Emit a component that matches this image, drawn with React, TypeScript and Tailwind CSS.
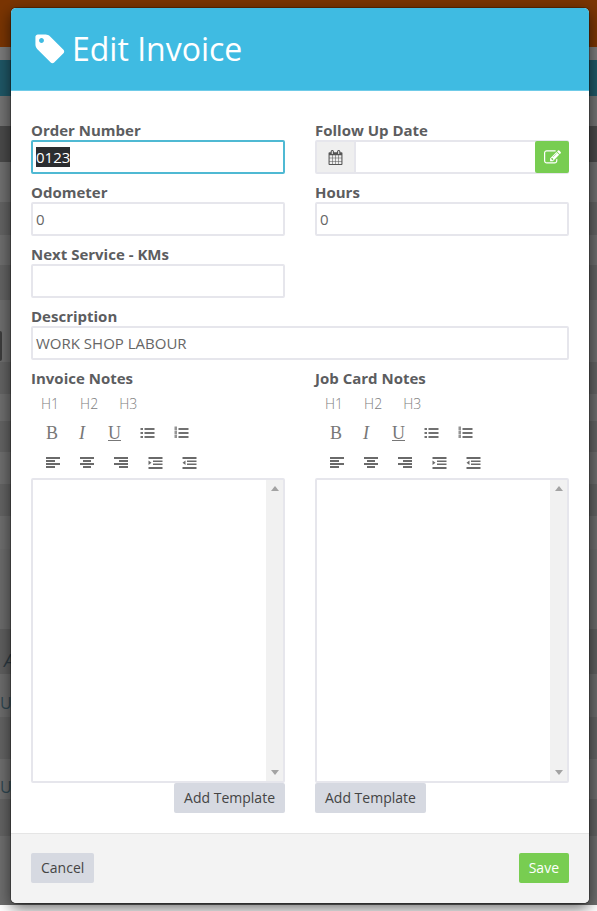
import React from "react";

const font = { fontFamily: '"Open Sans", sans-serif' };

function TagIcon() {
  return (
    <svg width="34" height="34" viewBox="0 0 1792 1792" fill="#fff">
      <path d="M576 448q0-53-37.500-90.500t-90.500-37.500-90.500 37.500-37.500 90.500 37.500 90.500 90.500 37.500 90.500-37.500 37.500-90.500zm1067 576q0 53-37 90l-491 492q-39 37-91 37-53 0-90-37l-715-716q-38-37-64.500-101t-26.500-117v-416q0-52 38-90t90-38h416q53 0 117 26.500t102 64.500l715 714q37 39 37 91z" />
    </svg>
  );
}
function CalIcon() {
  return (
    <svg width="15" height="15" viewBox="0 0 1792 1792" fill="#555">
      <path d="M192 1664h288v-288h-288v288zm352 0h320v-288h-320v288zm-352-352h288v-320h-288v320zm352 0h320v-320h-320v320zm-352-384h288v-288h-288v288zm736 736h320v-288h-320v288zm-384-736h320v-288h-320v288zm768 736h288v-288h-288v288zm-384-352h320v-320h-320v320zm-352-864v-288q0-13-9.500-22.500t-22.500-9.500h-64q-13 0-22.500 9.500t-9.500 22.500v288q0 13 9.500 22.500t22.500 9.500h64q13 0 22.500-9.500t9.500-22.500zm736 864h288v-320h-288v320zm-384-384h320v-288h-320v288zm384 0h288v-288h-288v288zm32-480v-288q0-13-9.500-22.500t-22.500-9.500h-64q-13 0-22.500 9.500t-9.500 22.500v288q0 13 9.500 22.500t22.500 9.500h64q13 0 22.500-9.500t9.500-22.500zm384-64v1280q0 52-38 90t-90 38h-1408q-52 0-90-38t-38-90v-1280q0-52 38-90t90-38h128v-96q0-66 47-113t113-47h64q66 0 113 47t47 113v96h384v-96q0-66 47-113t113-47h64q66 0 113 47t47 113v96h128q52 0 90 38t38 90z" />
    </svg>
  );
}
function EditIcon() {
  return (
    <svg width="17" height="17" viewBox="0 0 1792 1792" fill="#fff">
      <path d="M888 1184l116-116-152-152-116 116v56h96v96h56zm440-720q-16-16-33 1l-350 350q-17 17-1 33t33-1l350-350q17-17 1-33zm80 594v190q0 119-84.500 203.500t-203.500 84.500h-832q-119 0-203.500-84.500t-84.500-203.500v-832q0-119 84.500-203.500t203.500-84.500h832q63 0 117 25 15 7 18 23 3 17-9 29l-49 49q-14 14-32 8-23-6-45-6h-832q-66 0-113 47t-47 113v832q0 66 47 113t113 47h832q66 0 113-47t47-113v-126q0-13 9-22l64-64q15-15 35-7t20 29zm-96-738l288 288-672 672h-288v-288zm444 132l-92 92-288-288 92-92q28-28 68-28t68 28l152 152q28 28 28 68t-28 68z" />
    </svg>
  );
}

function Bars({ rows }: { rows: [number, number][] }) {
  return (
    <svg width="15" height="14" viewBox="0 0 15 14" fill="#6a6a6a">
      {rows.map(([x, w], i) => (
        <rect key={i} x={x} y={1 + i * 3} width={w} height="2" />
      ))}
    </svg>
  );
}
function ListIcon({ ordered }: { ordered?: boolean }) {
  return (
    <svg width="15" height="15" viewBox="0 0 15 15" fill="#6a6a6a">
      {[2, 6, 10].map((y) => (
        <React.Fragment key={y}>
          {ordered ? (
            <rect x="0.500" y={y - 1.500} width="2.500" height="3.500" opacity="0.75" />
          ) : (
            <rect x="0.500" y={y} width="2.500" height="2" />
          )}
          <rect x="4.500" y={y} width="10" height="2" />
        </React.Fragment>
      ))}
    </svg>
  );
}
function Indent({ out }: { out?: boolean }) {
  return (
    <svg width="15" height="14" viewBox="0 0 15 14" fill="#6a6a6a">
      <rect x="0.500" y="1" width="14" height="2" />
      <rect x="5" y="4.500" width="9.500" height="1.500" />
      <rect x="5" y="7.500" width="9.500" height="1.500" />
      <rect x="0.500" y="11" width="14" height="2" />
      <path d={out ? "M3.500 4.500v4.500l-3-2.250z" : "M0.500 4.500v4.500l3-2.250z"} />
    </svg>
  );
}

const serif = { fontFamily: '"Liberation Serif", serif' };

function Editor() {
  return (
    <div>
      <div className="flex h-[30px] items-center text-[14px] font-light text-[#707070] opacity-90 pl-[10px] gap-[21px]">
        <span>H1</span>
        <span>H2</span>
        <span>H3</span>
      </div>
      <div className="flex h-[30px] items-center text-[#707070] opacity-95 pl-[15px]">
        <span className="w-[33px] text-[18px] leading-none" style={serif}>B</span>
        <span className="w-[29px] text-[18px] leading-none italic" style={serif}>I</span>
        <span className="w-[32px] text-[18px] leading-none underline" style={serif}>U</span>
        <span className="w-[34px] flex"><ListIcon /></span>
        <span className="flex"><ListIcon ordered /></span>
      </div>
      <div className="flex h-[28px] items-center pt-[2px] pl-[15px] gap-[19px]">
        <Bars rows={[[0, 14], [0, 9], [0, 14], [0, 9]]} />
        <Bars rows={[[0, 14], [3, 8], [0, 14], [3, 8]]} />
        <Bars rows={[[0, 14], [5, 9], [0, 14], [5, 9]]} />
        <Indent />
        <Indent out />
      </div>
      <div className="mt-[2px] flex h-[305px] border-2 border-[#e6e6ec] rounded-[2px] bg-white">
        <div className="flex-1" />
        <div className="w-[17px] bg-[#f1f1f1] flex flex-col items-center justify-between py-[6px]">
          <svg width="8" height="5" viewBox="0 0 8 5" fill="#a3a3a3"><path d="M4 0l4 5H0z" /></svg>
          <svg width="8" height="5" viewBox="0 0 8 5" fill="#a3a3a3"><path d="M4 5l4-5H0z" /></svg>
        </div>
      </div>
    </div>
  );
}

function Label({ children }: { children: React.ReactNode }) {
  return <div className="h-[20px] text-[15px] leading-[21px] font-bold text-[#5c5d5f]">{children}</div>;
}
function Field({ value, focus }: { value?: string; focus?: boolean }) {
  return (
    <div className={`h-[34px] border-2 rounded-[2px] px-[3px] flex items-center text-[15px] text-[#666] bg-white ${focus ? "border-[#4fb9d3]" : "border-[#e6e6ec]"}`}>
      {focus ? <span className="bg-[#2b2d30] text-white leading-[20px]">{value}</span> : value}
    </div>
  );
}
function Btn({ children, green }: { children: React.ReactNode; green?: boolean }) {
  return (
    <div className={`h-[30px] px-[10px] pb-[1px] inline-flex items-center rounded-[2px] text-[14px] ${green ? "bg-[#78cd51] text-white" : "bg-[#d6d9e1] text-[#444]"}`}>
      {children}
    </div>
  );
}

const bands: [string, number][] = [
  ["bg-[#7a3503]", 47], ["bg-[#7b7b7b]", 13], ["bg-[#1f5766]", 36], ["bg-[#737373]", 30],
  ["bg-[#4a4a4a]", 36], ["bg-[#707070]", 40], ["bg-[#636363]", 33], ["bg-[#6e6e6e]", 30],
  ["bg-[#636363]", 35], ["bg-[#6e6e6e]", 62], ["bg-[#636363]", 32], ["bg-[#6e6e6e]", 27],
  ["bg-[#636363]", 31], ["bg-[#6e6e6e]", 32], ["bg-[#636363]", 32], ["bg-[#6e6e6e]", 33],
  ["bg-[#6b6b6b]", 80], ["bg-[#5f5f5f]", 45], ["bg-[#6c6c6c]", 43], ["bg-[#636363]", 42],
  ["bg-[#6e6e6e]", 40], ["bg-[#636363]", 37], ["bg-[#6e6e6e]", 69],
];

export default function App() {
  return (
    <div className="relative h-[911px] w-[597px] overflow-hidden antialiased" style={font}>
      <div className="flex flex-col">
        {bands.map(([c, h], i) => (
          <div key={i} className={c} style={{ height: h }} />
        ))}
      </div>
      <div className="absolute left-0 top-[331px] w-[2px] h-[30px] bg-[#3c3c3c] rounded-r-[2px]" />
      <span className="absolute left-[4px] top-[650px] text-[18px] leading-[20px] italic text-[#2d3a42]">A</span>
      <span className="absolute left-0 top-[693px] text-[16px] leading-[20px] text-[#2f4650]">U</span>
      <span className="absolute left-0 top-[777px] text-[16px] leading-[20px] text-[#2f4650]">UI</span>
      <div className="absolute left-[11px] top-[8px] w-[578px] h-[895px] flex flex-col rounded-[5px] overflow-hidden bg-white shadow-[0_0_0_1px_rgba(0,0,0,0.25),0_5px_15px_rgba(0,0,0,0.6)]">
        <div className="h-[83px] bg-[#3fbbe2] border-b border-[#6fcbe8] flex items-center pl-[22px] text-white shrink-0">
          <TagIcon />
          <span className="ml-[5px] text-[32px] leading-none">Edit Invoice</span>
        </div>
        <div className="flex-1 px-[20px] pt-[29px]">
          <div className="grid grid-cols-2 gap-x-[30px]">
            <div className="h-[62px]">
              <Label>Order Number</Label>
              <Field value="0123" focus />
            </div>
            <div className="h-[62px]">
              <Label>Follow Up Date</Label>
              <div className="h-[34px] flex border-2 border-[#e6e6ec] rounded-[2px] bg-white">
                <div className="w-[39px] bg-[#efefef] border-r-2 border-[#e6e6ec] flex items-center justify-center"><CalIcon /></div>
                <div className="flex-1" />
                <div className="w-[34px] -mr-[2px] -my-[1px] rounded-[2px] bg-[#78cd51] flex items-center justify-center"><EditIcon /></div>
              </div>
            </div>
            <div className="h-[62px]">
              <Label>Odometer</Label>
              <Field value="0" />
            </div>
            <div className="h-[62px]">
              <Label>Hours</Label>
              <Field value="0" />
            </div>
            <div className="h-[62px]">
              <Label>Next Service - KMs</Label>
              <Field />
            </div>
            <div />
            <div className="col-span-2 h-[62px]">
              <Label>Description</Label>
              <Field value="WORK SHOP LABOUR" />
            </div>
            <div>
              <Label>Invoice Notes</Label>
              <Editor />
              <div className="flex justify-end"><Btn>Add Template</Btn></div>
            </div>
            <div>
              <Label>Job Card Notes</Label>
              <Editor />
              <div className="flex justify-start"><Btn>Add Template</Btn></div>
            </div>
          </div>
        </div>
        <div className="h-[70px] shrink-0 border-t border-[#e5e5e5] bg-[#f3f3f3] flex items-start pt-[19px] justify-between px-[20px]">
          <Btn>Cancel</Btn>
          <Btn green>Save</Btn>
        </div>
      </div>
    </div>
  );
}
